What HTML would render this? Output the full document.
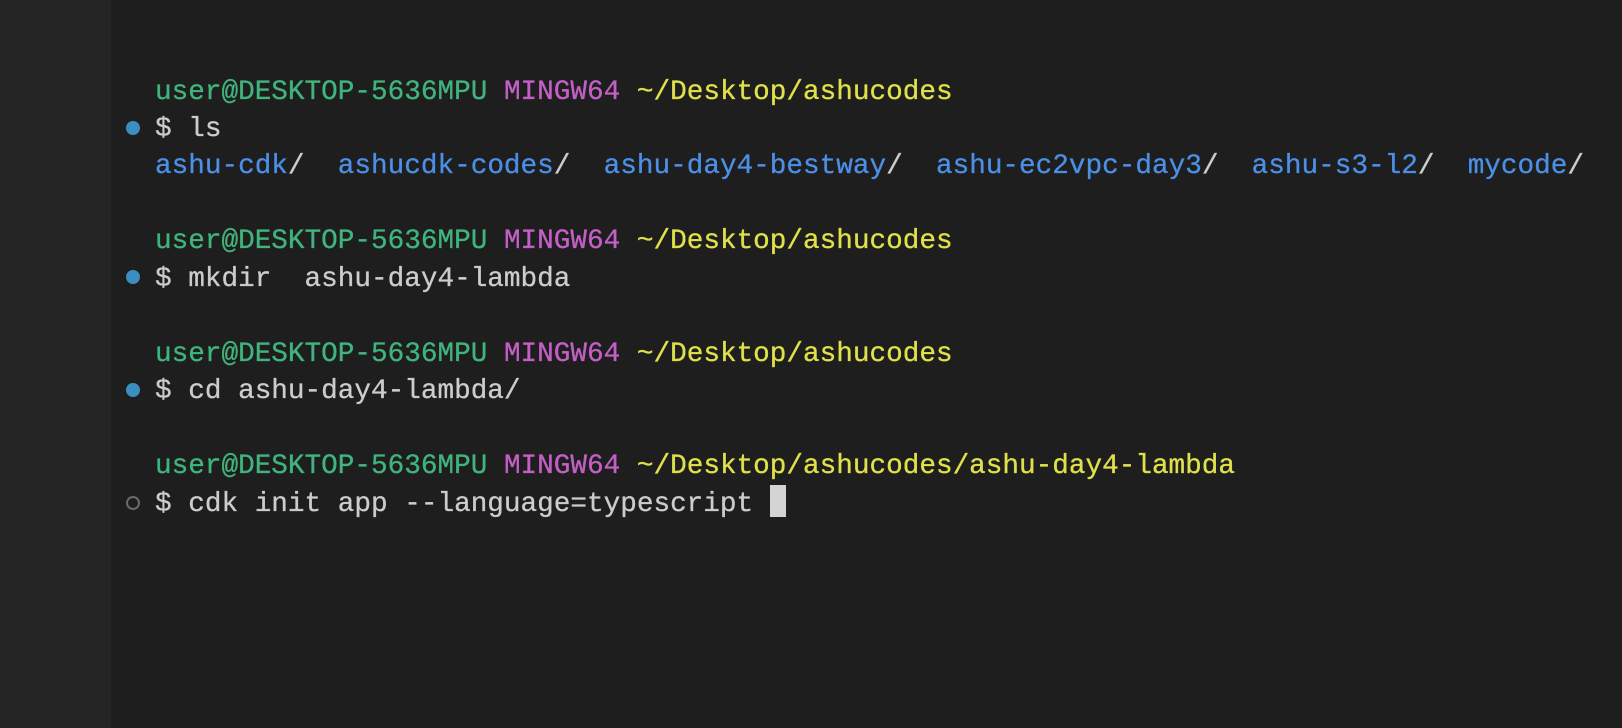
<!DOCTYPE html>
<html><head><style>
html,body{margin:0;padding:0;}
body{width:1622px;height:728px;background:#1e1e1e;overflow:hidden;position:relative;font-family:"Liberation Mono",monospace;font-size:27.7px;}
.gut{position:absolute;left:0;top:0;width:111px;height:728px;background:#252526;}
.t{position:absolute;left:155px;top:73.5px;line-height:37.45px;color:#cccccc;white-space:pre;-webkit-text-stroke:0.3px currentColor;}
.g{color:#3fb47c}.m{color:#c35fc6}.y{color:#e0e04a}.b{color:#4b8fe6}
.dot{position:absolute;left:126px;width:14px;height:14px;border-radius:50%;background:#3a8fc0;}
.o{background:none;border:2px solid #6a6a6a;width:10px;height:10px;}
.cur{display:inline-block;width:16px;height:32px;background:#d4d4d4;vertical-align:-6px;}
</style></head><body>
<div class="gut"></div>
<div class="dot" style="top:121px"></div>
<div class="dot" style="top:270px"></div>
<div class="dot" style="top:383px"></div>
<div class="dot o" style="top:496px"></div>
<div class="t"><span class="g">user@DESKTOP-5636MPU</span> <span class="m">MINGW64</span> <span class="y">~/Desktop/ashucodes</span>
$ ls
<span class="b">ashu-cdk</span>/  <span class="b">ashucdk-codes</span>/  <span class="b">ashu-day4-bestway</span>/  <span class="b">ashu-ec2vpc-day3</span>/  <span class="b">ashu-s3-l2</span>/  <span class="b">mycode</span>/

<span class="g">user@DESKTOP-5636MPU</span> <span class="m">MINGW64</span> <span class="y">~/Desktop/ashucodes</span>
$ mkdir  ashu-day4-lambda

<span class="g">user@DESKTOP-5636MPU</span> <span class="m">MINGW64</span> <span class="y">~/Desktop/ashucodes</span>
$ cd ashu-day4-lambda/

<span class="g">user@DESKTOP-5636MPU</span> <span class="m">MINGW64</span> <span class="y">~/Desktop/ashucodes/ashu-day4-lambda</span>
$ cdk init app --language=typescript <span class="cur"></span></div>
</body></html>
